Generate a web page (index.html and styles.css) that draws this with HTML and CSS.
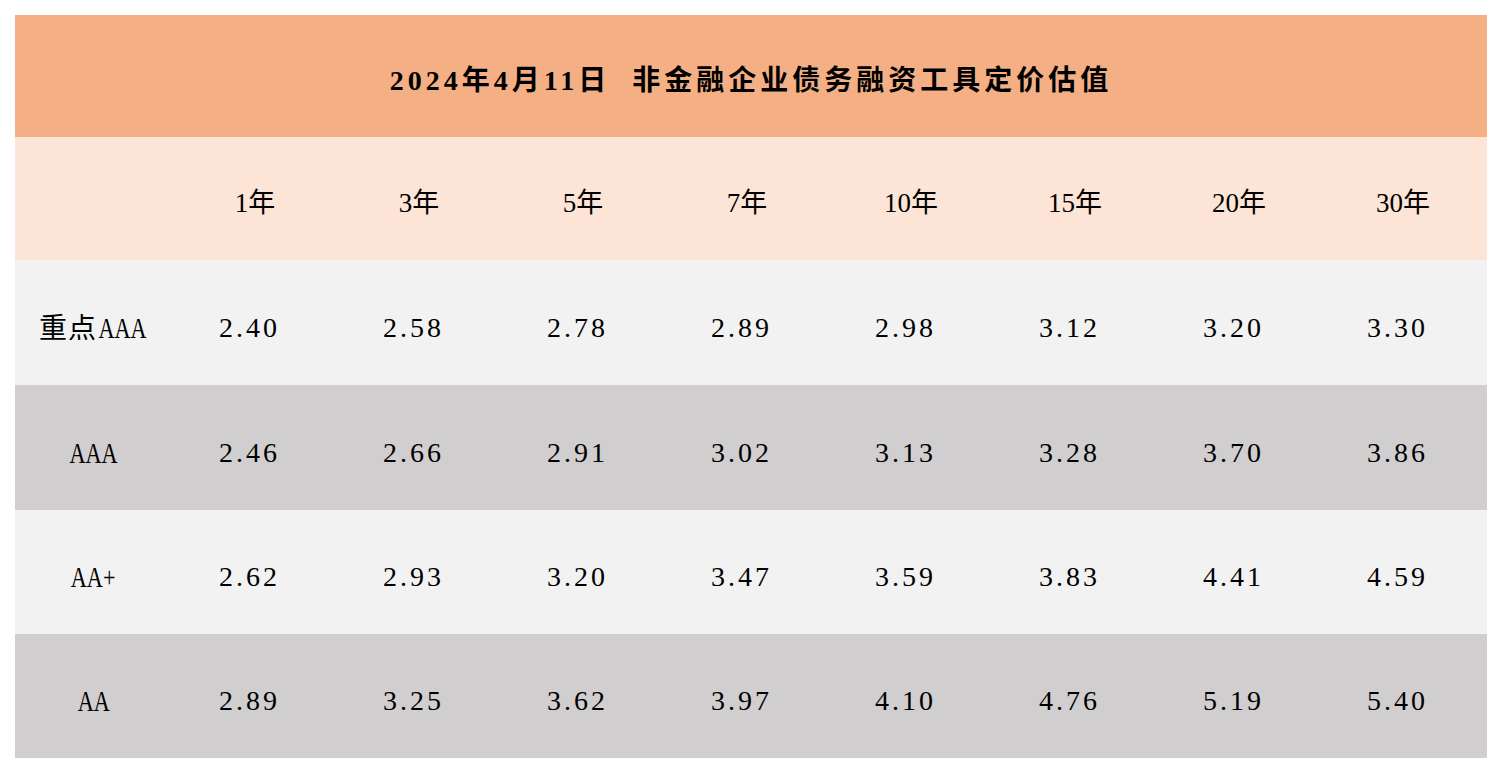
FILE: index.html
```html
<!DOCTYPE html>
<html lang="zh-CN">
<head>
<meta charset="utf-8">
<title>非金融企业债务融资工具定价估值</title>
<link rel="stylesheet" href="styles.css">
</head>
<body>
<div class="sheet">
  <div class="title-row">2024年4月11日&nbsp;&nbsp;非金融企业债务融资工具定价估值</div>
  <div class="row head">
    <div class="cell label"></div>
    <div class="cell">1年</div><div class="cell">3年</div><div class="cell">5年</div><div class="cell">7年</div>
    <div class="cell">10年</div><div class="cell">15年</div><div class="cell">20年</div><div class="cell">30年</div>
  </div>
  <div class="row light h125">
    <div class="cell label">重点<span class="lat">AAA</span></div>
    <div class="cell num">2.40</div><div class="cell num">2.58</div><div class="cell num">2.78</div><div class="cell num">2.89</div>
    <div class="cell num">2.98</div><div class="cell num">3.12</div><div class="cell num">3.20</div><div class="cell num">3.30</div>
  </div>
  <div class="row dark h125">
    <div class="cell label"><span class="lat">AAA</span></div>
    <div class="cell num">2.46</div><div class="cell num">2.66</div><div class="cell num">2.91</div><div class="cell num">3.02</div>
    <div class="cell num">3.13</div><div class="cell num">3.28</div><div class="cell num">3.70</div><div class="cell num">3.86</div>
  </div>
  <div class="row light h124">
    <div class="cell label"><span class="lat">AA+</span></div>
    <div class="cell num">2.62</div><div class="cell num">2.93</div><div class="cell num">3.20</div><div class="cell num">3.47</div>
    <div class="cell num">3.59</div><div class="cell num">3.83</div><div class="cell num">4.41</div><div class="cell num">4.59</div>
  </div>
  <div class="row dark h124">
    <div class="cell label"><span class="lat">AA</span></div>
    <div class="cell num">2.89</div><div class="cell num">3.25</div><div class="cell num">3.62</div><div class="cell num">3.97</div>
    <div class="cell num">4.10</div><div class="cell num">4.76</div><div class="cell num">5.19</div><div class="cell num">5.40</div>
  </div>
</div>
</body>
</html>
```

FILE: styles.css
```css
html, body {
  margin: 0;
  padding: 0;
  background: #ffffff;
}
body {
  padding: 15px;
  font-family: "Liberation Serif", "Noto Sans CJK SC", serif;
  color: #000000;
}
.sheet {
  width: 1472px;
  display: flex;
  flex-direction: column;
}
.title-row {
  height: 122px;
  background: #f4b084;
  display: flex;
  align-items: center;
  justify-content: center;
  font-weight: bold;
  font-size: 28px;
  letter-spacing: 4px;
  padding-top: 4px;
  box-sizing: border-box;
  white-space: pre;
}
.row {
  display: grid;
  grid-template-columns: 151px repeat(8, 164px);
  align-items: center;
  box-sizing: border-box;
  padding-top: 10px;
}
.head { height: 123px; background: #fce4d6; }
.h125 { height: 125px; }
.h124 { height: 124px; }
.light { background: #f2f2f2; }
.dark { background: #d0cece; }
.cell {
  text-align: center;
  font-size: 28px;
  line-height: 1;
}
.head .cell {
  padding-left: 14px;
  font-size: 27px;
}
.num {
  letter-spacing: 3px;
  padding-left: 3px;
}
.label {
  letter-spacing: 1px;
  padding-left: 6px;
}
.lat {
  display: inline-block;
  font-size: 30px;
  letter-spacing: 0;
  transform: scaleX(0.74);
  margin: 0 -7px;
}
```
